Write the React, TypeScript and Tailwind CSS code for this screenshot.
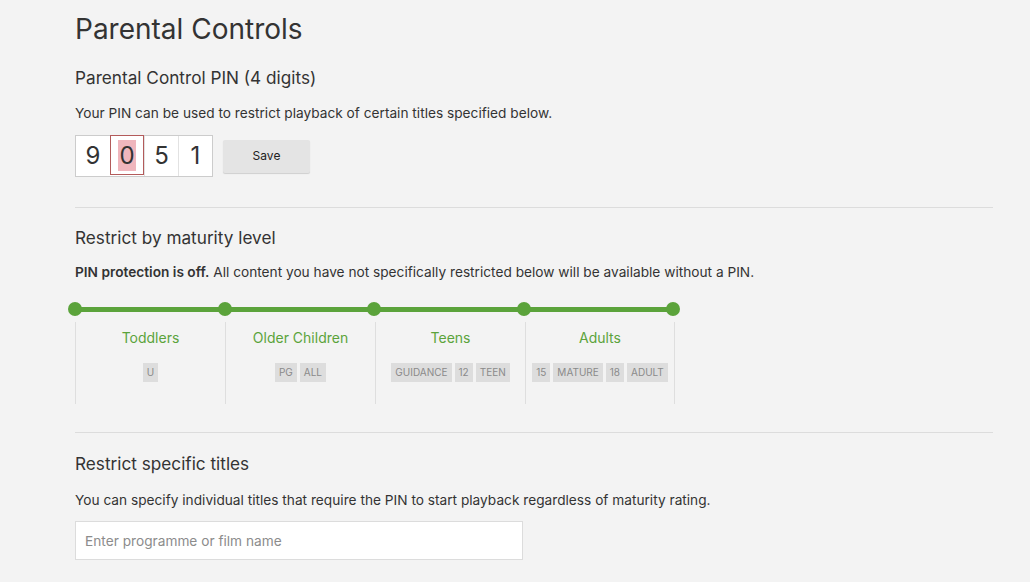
import React from "react";

const levels = [
  { name: "Toddlers", tags: ["U"] },
  { name: "Older Children", tags: ["PG", "ALL"] },
  { name: "Teens", tags: ["GUIDANCE", "12", "TEEN"] },
  { name: "Adults", tags: ["15", "MATURE", "18", "ADULT"] },
];

export default function App() {
  return (
    <div
      className="w-[1030px] h-[582px] overflow-hidden bg-[#f3f3f3] text-[#333]"
      style={{ fontFamily: 'Inter, "Liberation Sans", Arial, sans-serif' }}
    >
      <div className="ml-[75px] w-[918px] pt-[12px]">
        <h1 className="text-[28px] leading-[34px] text-[#333]">Parental Controls</h1>
        <h2 className="mt-[21px] text-[17.2px] leading-[22px]">Parental Control PIN (4 digits)</h2>
        <p className="mt-[15px] text-[13.7px] leading-[18px]">
          Your PIN can be used to restrict playback of certain titles specified below.
        </p>
        <div className="mt-[13px] flex items-center gap-[10px]">
          <div className="flex h-[42px] border border-[#ccc] bg-white">
            {["9", "0", "5", "1"].map((d, i) => (
              <div
                key={i}
                className={
                  "w-[34px] h-full flex items-center justify-center text-[24px] " +
                  (i === 1
                    ? "border border-[#b35b5b] -my-px h-[42px]"
                    : i > 1
                    ? "border-l border-[#e2e2e2]"
                    : "")
                }
              >
                {i === 1 ? (
                  <span className="bg-[#efb6bd] leading-[31px] px-[1px]">{d}</span>
                ) : (
                  d
                )}
              </div>
            ))}
          </div>
          <button className="w-[87px] h-[33px] bg-[#e4e4e4] text-[12px] text-[#222] rounded-[2px] shadow-[0_1px_1px_rgba(0,0,0,0.15)]">
            Save
          </button>
        </div>

        <div className="mt-[30px] border-t border-[#dcdcdc]" />

        <h2 className="mt-[19px] text-[17.2px] leading-[22px]">Restrict by maturity level</h2>
        <p className="mt-[14px] text-[13.7px] leading-[18px]">
          <span className="font-semibold">PIN protection is off.</span> All content you have not
          specifically restricted below will be available without a PIN.
        </p>

        <div className="mt-[21px] w-[612px] -ml-[7px]">
          <div className="relative h-[14px]">
            <div className="absolute left-[7px] right-[7px] top-[5px] h-[5px] bg-[#5ba33b]" />
            <div className="flex justify-between">
              {[0, 1, 2, 3, 4].map((i) => (
                <div key={i} className="relative w-[14px] h-[14px] rounded-full bg-[#5ba33b]" />
              ))}
            </div>
          </div>
          <div className="flex ml-[7px] mt-[6px] h-[82px]">
            {levels.map((l, i) => (
              <div
                key={l.name}
                className={
                  "w-[150px] flex flex-col items-center border-l border-[#dedede] " +
                  (i === 3 ? "border-r" : "")
                }
              >
                <div className="mt-[7px] text-[14px] leading-[18px] text-[#5ba33b]">{l.name}</div>
                <div className="mt-[16px] flex gap-[3px]">
                  {l.tags.map((t) => (
                    <span
                      key={t}
                      className="bg-[#dddddd] text-[#8a8a8a] text-[10px] leading-[19px] px-[4px]"
                    >
                      {t}
                    </span>
                  ))}
                </div>
              </div>
            ))}
          </div>
        </div>

        <div className="mt-[28px] border-t border-[#dcdcdc]" />

        <h2 className="mt-[20px] text-[17.2px] leading-[22px]">Restrict specific titles</h2>
        <p className="mt-[16px] text-[13.7px] leading-[18px]">
          You can specify individual titles that require the PIN to start playback regardless of maturity
          rating.
        </p>
        <input
          className="mt-[12px] w-[448px] h-[39px] bg-white border border-[#dcdcdc] px-[9px] text-[13.7px] placeholder:text-[#8c8c8c] outline-none"
          placeholder="Enter programme or film name"
        />
      </div>
    </div>
  );
}
